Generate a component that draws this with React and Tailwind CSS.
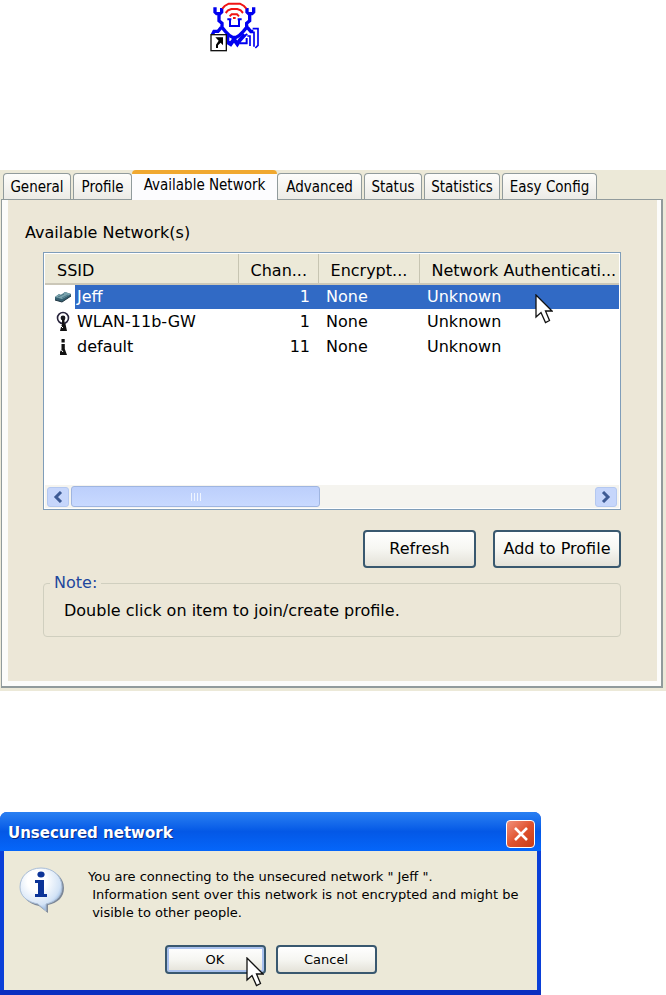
import { useState } from 'react'
import clsx from 'clsx'

const tabs = [
  { name: 'General', width: 'w-[68px]' },
  { name: 'Profile', width: 'w-[59px] ml-0.5' },
  { name: 'Available Network', width: 'w-[145px]' },
  { name: 'Advanced', width: 'w-[85px]' },
  { name: 'Status', width: 'w-[58px] ml-0.5' },
  { name: 'Statistics', width: 'w-[76px] ml-0.5' },
  { name: 'Easy Config', width: 'w-[95px] ml-0.5' },
]

const networks = [
  { ssid: 'Jeff', channel: 1, encryption: 'None', auth: 'Unknown', icon: CardIcon },
  { ssid: 'WLAN-11b-GW', channel: 1, encryption: 'None', auth: 'Unknown', icon: AntennaIcon },
  { ssid: 'default', channel: 11, encryption: 'None', auth: 'Unknown', icon: StationIcon },
]

function CardIcon() {
  return (
    <svg className="w-[18px] h-3" viewBox="0 0 18 12">
      <path d="M1 6 L5 3 L7 4 L11 1 L17 3 L17 5 L8 11 L1 9 Z" fill="#355f70" />
      <path d="M1 6 L5 3 L7 4 L11 1 L17 3 L8 8 Z" fill="#7aa3ad" />
      <path d="M4 6 L10 3 M8 7 L14 4" stroke="#4b7685" strokeWidth="1" />
      <path d="M1 9 L8 11 L17 5" fill="none" stroke="#1e3440" strokeWidth="1" />
    </svg>
  )
}

function AntennaIcon() {
  return (
    <svg className="w-[14px] h-[22px]" viewBox="0 0 14 22">
      <circle cx="7" cy="7" r="5.5" fill="none" stroke="#28243c" strokeWidth="1.6" />
      <circle cx="7" cy="7" r="2.4" fill="#17171c" />
      <path d="M6 8 H8.5 V13 H9.5 L11 20 H4 L5 16 L6 13 Z" fill="#111" />
      <path d="M5 15 L7 17" stroke="#fff" strokeWidth="1" />
    </svg>
  )
}

function StationIcon() {
  return (
    <svg className="w-[14px] h-[18px]" viewBox="0 0 14 18">
      <rect x="5.5" y="1" width="3.2" height="3.5" fill="#111" />
      <path d="M5.5 6 H8.8 V11 L11 17 H4 V14 L5.5 11 Z" fill="#111" />
      <path d="M5 11.5 L7 14" stroke="#fff" strokeWidth="1" />
    </svg>
  )
}

function ShortcutIcon() {
  return (
    <svg className="w-[50px] h-[52px]" viewBox="30 0 150 156">
      <g fill="none" stroke="#0000f0" strokeWidth="10">
        <path d="M45 22 V36 L50 41 H60 L65 36 V24" />
        <path d="M141 24 V36 L146 41 H156 L161 36 V22" />
        <path d="M57 42 V62 L66 70 V82 L76 94 L88 106 L98 112 H108 L118 106 L130 94 L140 82 V70 L149 62 V42" />
        <path d="M90 55 V78 H117 V55 M82 58 H94 M113 58 H125" strokeWidth="6" />
        <path d="M64 82 L54 94 H42 L37 104 M142 82 L152 94 H160" />
        <path d="M82 104 V126 L92 132 L102 118 L112 132 L120 120 L134 104" strokeWidth="12" />
        <path d="M120 130 H140 V114 M126 112 L142 102" strokeWidth="6" />
        <path d="M142 108 H150 V138 M150 97 H162 V140 M158 86 H174 V136 L166 144" strokeWidth="5" />
      </g>
      <g fill="none" stroke="#f01414" strokeWidth="6">
        <path d="M67 26 L74 18 L86 11 H120 L132 18 L139 26" />
        <path d="M77 39 L84 31 L94 27 H112 L122 31 L129 39" />
        <path d="M89 49 L95 43 H111 L117 49" />
        <path d="M99 54 H107" />
      </g>
      <rect x="33" y="104" width="46" height="48" fill="#fff" stroke="#111" strokeWidth="4" />
      <path d="M46 112 H69 V136 L62 128 L54 136 V144 H48 V134 L56 122 Z" fill="#000" />
    </svg>
  )
}

function InfoIcon() {
  return (
    <svg className="w-[46px] h-[46px]" viewBox="0 0 46 46">
      <defs>
        <radialGradient id="bubble" cx="0.4" cy="0.3" r="0.75">
          <stop offset="0.3" stopColor="#ffffff" />
          <stop offset="0.75" stopColor="#d3e3f6" />
          <stop offset="1" stopColor="#7fa6d8" />
        </radialGradient>
      </defs>
      <path
        d="M24 3 C37 3 45 11 45 21 C45 30 39 36 29 38 V46 L20 39 C9 37 3 30 3 21 C3 11 12 3 24 3 Z"
        fill="#7c8797"
      />
      <path
        d="M22 1 C34 1 43 9 43 20 C43 29 37 35 27 37 V44 L19 37 C8 35 1 29 1 20 C1 9 10 1 22 1 Z"
        fill="url(#bubble)"
        stroke="#a9bdd6"
        strokeWidth="1"
      />
      <ellipse cx="22" cy="7.5" rx="3.6" ry="3" fill="#0c3498" />
      <path d="M16 13 H25 V27 H28 V30 H16 V27 H19 V16 H16 Z" fill="#0c3498" />
    </svg>
  )
}

function Pointer({ className }) {
  return (
    <svg className={clsx('absolute w-[18px] h-[30px] pointer-events-none', className)} viewBox="0 0 18 30">
      <path
        d="M1 1 V23 L6 18.5 L10.5 28.5 L14.5 26.5 L10.5 17 H17 Z"
        fill="#fff"
        stroke="#111"
        strokeWidth="1.3"
      />
    </svg>
  )
}

function Chevron({ d }) {
  return (
    <svg className="w-3 h-3" viewBox="0 0 12 12">
      <path d={d} fill="none" stroke="#3d5a94" strokeWidth="3" />
    </svg>
  )
}

function XpButton({ className, children, ...props }) {
  return (
    <button
      type="button"
      className={clsx(
        'rounded-[4px] border-2 border-[#39586f] bg-linear-to-b from-white via-[#f6f6f2] to-[#e4e2d8] whitespace-nowrap text-black',
        className
      )}
      {...props}
    >
      {children}
    </button>
  )
}

function NetworkList({ selected, onSelect }) {
  return (
    <div className="relative flex h-[258px] flex-col border border-[#7f9db9] bg-white p-px">
      <table className="w-full table-fixed border-collapse text-left text-[16px] leading-6">
        <colgroup>
          <col className="w-[30px]" />
          <col className="w-[163px]" />
          <col className="w-[80px]" />
          <col className="w-[101px]" />
          <col />
        </colgroup>
        <thead>
          <tr className="h-[30px] border-b-2 border-[#cbc7b8] bg-[#ece9d8] whitespace-nowrap">
            <th scope="col" colSpan={2} className="border-r border-[#c7c5b2] p-0 pt-1 pl-3 font-normal">SSID</th>
            <th scope="col" className="border-r border-[#c7c5b2] p-0 pt-1 pl-3 font-normal">Chan...</th>
            <th scope="col" className="border-r border-[#c7c5b2] p-0 pt-1 pl-3 font-normal">Encrypt...</th>
            <th scope="col" className="p-0 pt-1 pl-3 font-normal">Network Authenticati...</th>
          </tr>
        </thead>
        <tbody>
          {networks.map((network, i) => {
            const Icon = network.icon
            const cell = clsx('p-0', selected === i && 'bg-[#316ac5] text-white')
            return (
              <tr key={network.ssid} className="h-[25px]" onClick={() => onSelect(i)}>
                <td className="p-0">
                  <div className="flex h-6 items-center justify-center pl-1.5">
                    <Icon />
                  </div>
                </td>
                <td className={clsx(cell, 'pl-0.5')}>{network.ssid}</td>
                <td className={clsx(cell, 'pr-2 text-right')}>{network.channel}</td>
                <td className={clsx(cell, 'pl-2')}>{network.encryption}</td>
                <td className={clsx(cell, 'pl-2')}>{network.auth}</td>
              </tr>
            )
          })}
        </tbody>
      </table>
      <div className="mt-auto flex h-[23px] items-center bg-[#f5f4ef] px-0.5">
        <button type="button" aria-label="Scroll left" className="flex h-5 w-[22px] items-center justify-center rounded-[3px] border border-[#b4c8f0] bg-[#c6d6fb]">
          <Chevron d="M9 1 L4 6 L9 11" />
        </button>
        <div className="ml-0.5 flex h-[21px] w-[249px] items-center justify-center gap-0.5 rounded-[3px] border border-[#9fb5e0] bg-linear-to-b from-[#bccffb] to-[#c8d9ff]">
          {[0, 1, 2, 3].map((n) => (
            <span key={n} className="h-2 w-px bg-[#eef4ff]" />
          ))}
        </div>
        <button type="button" aria-label="Scroll right" className="ml-auto flex h-5 w-[22px] items-center justify-center rounded-[3px] border border-[#b4c8f0] bg-[#c6d6fb]">
          <Chevron d="M3 1 L8 6 L3 11" />
        </button>
      </div>
      <Pointer className="top-[41px] left-[491px]" />
    </div>
  )
}

function App() {
  const [activeTab, setActiveTab] = useState('Available Network')
  const [selected, setSelected] = useState(0)

  return (
    <main className="bg-white font-['DejaVu_Sans',sans-serif] text-black">
      <div className="h-[170px] pl-[210px]">
        <ShortcutIcon />
      </div>

      <section className="bg-[#ece9d8] pr-0.5 pb-[3px]">
        <div
          role="tablist"
          className="flex h-[29px] items-end pl-[3px] font-['DejaVu_Sans_Condensed','DejaVu_Sans',sans-serif] text-[15px] leading-5"
        >
          {tabs.map((tab) => (
            <button
              key={tab.name}
              type="button"
              role="tab"
              aria-selected={activeTab === tab.name}
              onClick={() => setActiveTab(tab.name)}
              className={clsx(
                'rounded-t-[4px] whitespace-nowrap',
                tab.width,
                activeTab === tab.name
                  ? 'relative -mb-px h-[30px] border-t-4 border-[#f0a830] bg-[#fcfcfe] pb-1'
                  : 'h-[26px] border border-b-0 border-[#919b9c] bg-linear-to-b from-[#fdfdfb] to-[#ecebe6]'
              )}
            >
              {tab.name}
            </button>
          ))}
        </div>

        <div className="mx-px border border-[#919b9c] border-r-2 border-b-2 bg-[#fcfcfa] pr-1 pb-[5px] pl-1.5">
          <div className="bg-[#ece7d7] pt-5 pr-9 pb-11 pl-[35px]">
            <h2 className="-ml-[18px] pt-px text-[16px] leading-6">Available Network(s)</h2>
            <div className="mt-[7px]">
              <NetworkList selected={selected} onSelect={setSelected} />
            </div>
            <div className="mt-5 flex justify-end gap-[17px] text-[16px]">
              <XpButton className="h-[38px] w-[113px]">Refresh</XpButton>
              <XpButton className="h-[38px] w-[128px]">Add to Profile</XpButton>
            </div>
            <fieldset className="mt-[3px] h-[66px] rounded-[4px] border border-[#d0cfbf] px-1.5">
              <legend className="px-1 text-[16px] leading-6 text-[#1f479d]">Note:</legend>
              <p className="pt-1 pl-3.5 text-[16px] leading-6">Double click on item to join/create profile.</p>
            </fieldset>
          </div>
        </div>
      </section>

      <section
        role="dialog"
        aria-labelledby="dialog-title"
        className="mt-[121px] w-full max-w-[541px] rounded-t-[7px] border-b-[5px] border-[#0a2fc0] bg-[#0a3fd8]"
      >
        <header className="flex h-[39px] items-center justify-between rounded-t-[7px] bg-linear-to-b from-[#2a80f2] via-[#0458e6] to-[#0566fa] pt-1 pr-1.5 pl-2">
          <h2 id="dialog-title" className="text-[15px] font-bold text-white [text-shadow:1px_1px_#0a2a80]">
            Unsecured network
          </h2>
          <button type="button" aria-label="Close" className="flex h-7 w-[29px] items-center justify-center rounded-[4px] border border-white bg-linear-to-br from-[#f0907a] via-[#e0532e] to-[#c83c14]">
            <svg className="w-4 h-4" viewBox="0 0 16 16">
              <path d="M2 2 L14 14 M14 2 L2 14" stroke="#fff" strokeWidth="2.6" />
            </svg>
          </button>
        </header>
        <div className="mx-1 bg-[#ece9d8] pt-4 pb-4">
          <div className="flex">
            <div className="w-[84px] pl-[15px]">
              <InfoIcon />
            </div>
            <p className="pt-px text-[13px] leading-[18px] whitespace-pre">
              {'You are connecting to the unsecured network " Jeff ".\n Information sent over this network is not encrypted and might be\n visible to other people.'}
            </p>
          </div>
          <div className="mt-[23px] flex justify-center gap-2.5 text-[13px]">
            <XpButton className="relative h-[29px] w-[101px] ring-2 ring-[#a9c1ee] ring-inset">
              OK
              <Pointer className="top-[10px] left-[79px]" />
            </XpButton>
            <XpButton className="h-[29px] w-[101px]">Cancel</XpButton>
          </div>
        </div>
      </section>
    </main>
  )
}

export default App
